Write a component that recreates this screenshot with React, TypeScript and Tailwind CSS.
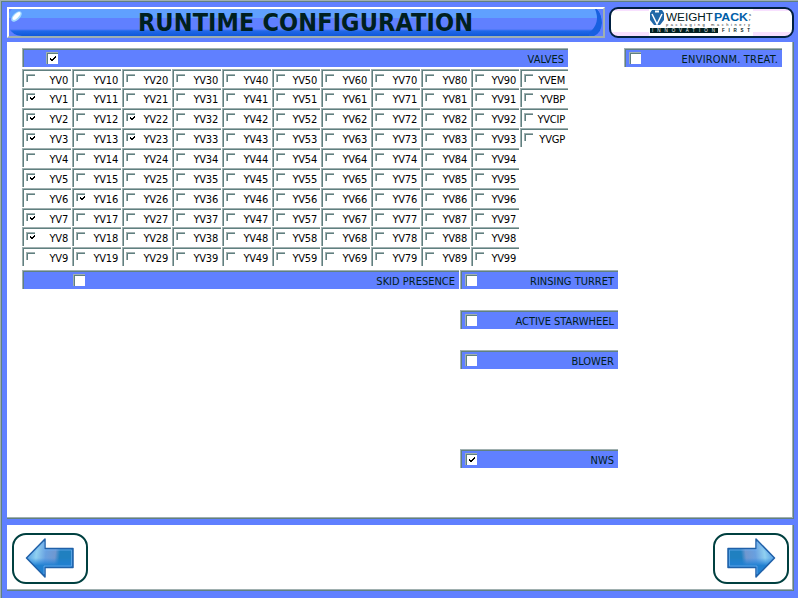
import React from "react";

const FONT = "font-['DejaVu_Sans_Condensed','DejaVu_Sans',sans-serif] [font-stretch:condensed]";

const CHECKED = new Set(["YV1", "YV2", "YV3", "YV5", "YV7", "YV8", "YV16", "YV22", "YV23"]);
const EXTRA = ["YVEM", "YVBP", "YVCIP", "YVGP"];

function Tick() {
  return (
    <svg width="7" height="7" viewBox="0 0 7 7" shapeRendering="crispEdges" fill="#000">
      <path d="M1 3h1v2h-1zM2 4h1v2h-1zM3 4h1v2h-1zM4 3h1v2h-1zM5 2h1v2h-1zM6 1h1v2h-1z" />
    </svg>
  );
}

function SmallTick() {
  return (
    <svg width="5" height="5" viewBox="0 0 5 5" shapeRendering="crispEdges" fill="#000">
      <path d="M0 1h1v2h-1zM1 2h1v2h-1zM2 2h1v2h-1zM3 1h1v2h-1zM4 0h1v2h-1z" />
    </svg>
  );
}

function Box({ on }: { on?: boolean }) {
  return (
    <span className="flex h-3 w-3 shrink-0 border-l border-t border-[#a0b0b0] bg-white">
      <span className="flex h-[11px] w-[11px] border-l border-t border-[#608080] pl-px pt-px">
        {on && <Tick />}
      </span>
    </span>
  );
}

function Cell({ label }: { label: string }) {
  return (
    <div className="mb-px mr-px border-l border-t border-[#a0b0b0]">
      <div className="flex h-full justify-between border-l border-t border-[#608080] pl-[2px] pr-[3px]">
        <span className="mt-[3px] h-2 w-[9px] border-l border-t border-[#a0b0b0]">
          <span className="flex h-[7px] w-2 border-l border-t border-[#608080] pl-[2px] pt-px">
            {CHECKED.has(label) && <SmallTick />}
          </span>
        </span>
        <span className="pt-[3px] text-[11px] leading-[13px] tracking-[-0.2px]">{label}</span>
      </div>
    </div>
  );
}

function Bar({ label, on, className, pad }: { label: string; on?: boolean; className: string; pad: string }) {
  return (
    <div className={"h-[19px] border-l border-t border-[#a0b0b0] " + className}>
      <div className={"flex h-full justify-between border-l border-t border-[#608080] bg-[#6080ff] pr-[4px] pt-[2px] " + pad}>
        <Box on={on} />
        <span className="pt-[1px] text-[11px] leading-[14px] text-[#002020]">{label}</span>
      </div>
    </div>
  );
}

function Arrow({ flip }: { flip?: boolean }) {
  return (
    <span className="flex h-[51px] w-[76px] items-start justify-center rounded-[14px] border-2 border-[#004040] bg-white pr-px pt-[3px]">
      <svg width="50" height="40" viewBox="0 0 50 40" className={flip ? "-scale-x-100" : ""}>
        <defs>
          <linearGradient id="arrow" x1="0" x2="1" y1="0" y2="0.1">
            <stop offset="0" stopColor="#4090e0" />
            <stop offset="0.25" stopColor="#90d0f0" />
            <stop offset="0.45" stopColor="#68a0e0" />
            <stop offset="0.65" stopColor="#7098d0" />
            <stop offset="0.75" stopColor="#2080c0" />
            <stop offset="1" stopColor="#2080c0" />
          </linearGradient>
          <linearGradient id="shade" x1="0" x2="0" y1="0" y2="1">
            <stop offset="0.5" stopColor="#2080e0" stopOpacity="0" />
            <stop offset="0.7" stopColor="#2080d0" />
          </linearGradient>
        </defs>
        <path d="M1.500 20 20 1V10.500H48V29.500H20V39Z" fill="url(#arrow)" />
        <path d="M1.500 20 20 1V10.500H48V29.500H20V39Z" fill="url(#shade)" stroke="#2060a8" strokeWidth="1.5" strokeLinejoin="round" />
        <path d="M3.500 20 19 4V12H46.500V28H19V36" fill="none" stroke="#70b0f0" strokeWidth="0.7" />
      </svg>
    </span>
  );
}

function Logo() {
  return (
    <div className="flex h-[31px] w-[185px] justify-center rounded-[9px] border-2 border-[#002040] bg-white bg-[linear-gradient(#f8e0ff_2px,transparent_2px,transparent_23px,#f8e0ff_23px)] pr-[2px]">
      <svg width="104" height="27" viewBox="0 0 104 27" className="font-['Liberation_Sans',Arial,sans-serif]">
        <rect width="104" height="27" fill="#fff" />
        <path d="M3 1H13L15 4V11L11 16H5L1 11V4Z" fill="#2068a8" />
        <path d="M3 5 8 15 13 5" fill="none" stroke="#fff" strokeWidth="1.500" />
        <path d="M6 1.500H10V3.500H6Z" fill="#fff" />
        <text x="17" y="11.500" fontSize="10" fill="#002020" textLength="47" lengthAdjust="spacingAndGlyphs">WEIGHT</text>
        <text x="65" y="11.500" fontSize="10" fontWeight="bold" fill="#0060a8" textLength="34" lengthAdjust="spacingAndGlyphs">PACK</text>
        <text x="100" y="7" fontSize="4" fill="#002020">s</text>
        <text x="100" y="12" fontSize="4" fill="#002020">r</text>
        <text x="17" y="17" fontSize="4" fill="#202828" textLength="84">packaging machinery</text>
        <rect x="1" y="19" width="68" height="5" fill="#002020" />
        <text x="3" y="23.200" fontSize="4.500" fill="#fff" textLength="63">INNOVATION</text>
        <text x="73" y="23.200" fontSize="4.500" fontWeight="bold" fill="#002020" textLength="28">FIRST</text>
      </svg>
    </div>
  );
}

export default function App() {
  const cells: string[] = [];
  for (let r = 0; r < 10; r++) {
    for (let c = 0; c < 10; c++) cells.push(c === 0 ? `YV${r}` : `YV${c}${r}`);
    cells.push(EXTRA[r] ?? "");
  }
  return (
    <div className={"h-[600px] w-[800px] overflow-hidden bg-white text-black " + FONT}>
      <div className="h-[598px] w-[798px] border-l border-t border-[#a0b0b0] bg-[#6080ff]">
        <div className="h-full border-l border-t border-[#608080] pl-[5px] pt-[5px]">
          <header className="flex h-[35px]">
            <div className="h-[31px] w-[598px] border-2 border-b-[#a0b0b0] border-l-white border-r-[#a0b0b0] border-t-white bg-[#6080ff]">
              <div className="flex h-[27px] justify-between bg-[linear-gradient(#60a0ff_0px,#60a0ff_9px,#6080ff_9px,#6080ff_20px,#2068e8_22px,#1058d8_27px)]">
                <svg width="14" height="27" viewBox="0 0 14 27">
                  <path d="M0 0H3L0 4ZM0 19Q3 26 13 27H0Z" fill="#6080ff" />
                  <ellipse cx="7.500" cy="7.500" rx="6.500" ry="3.500" transform="rotate(-45 7.500 7.500)" fill="#a0d8ff" />
                  <ellipse cx="7.500" cy="7" rx="5" ry="2" transform="rotate(-45 7.500 7)" fill="#fff" />
                </svg>
                <h1 className="-ml-px text-[25px] font-bold leading-[28px] tracking-[0.1px] text-[#002020]">RUNTIME CONFIGURATION</h1>
                <svg width="14" height="27" viewBox="0 0 14 27">
                  <path d="M6 0Q12 14 0 24V27H5Q13 23 13 14Q13 5 8 0Z" fill="#1860e0" />
                  <path d="M8 0H14V27H5Q13 23 13 14Q13 5 8 0Z" fill="#6080ff" />
                </svg>
              </div>
            </div>
            <div className="ml-1"><Logo /></div>
          </header>

          <main className="h-[477px] w-[787px] border-b border-r border-[#608080]">
            <div className="flex h-full border-b border-r border-[#a0b0b0] bg-white pl-[15px] pt-[6px]">
              <div className="w-[602px] shrink-0">
                <Bar label="VALVES" on className="w-[546px]" pad="pl-[22px]" />
                <div className="mt-[2px] grid grid-cols-[50px_50px_50px_50px_50px_49px_50px_50px_50px_49px_49px] grid-rows-[19px_20px_20px_20px_20px_20px_20px_19px_20px_20px]">
                  {cells.map((label, i) => (label ? <Cell key={i} label={label} /> : <span key={i} />))}
                </div>
                <div className="mt-[3px] flex gap-[1px]">
                  <Bar label="SKID PRESENCE" className="w-[437px]" pad="pl-[49px]" />
                  <Bar label="RINSING TURRET" className="w-[158px]" pad="pl-[3px]" />
                </div>
                <div className="ml-[438px] mt-[21px] flex flex-col">
                  <Bar label="ACTIVE STARWHEEL" className="w-[158px]" pad="pl-[3px]" />
                  <Bar label="BLOWER" className="mt-[21px] w-[158px]" pad="pl-[3px]" />
                  <Bar label="NWS" on className="mt-[80px] w-[158px]" pad="pl-[3px]" />
                </div>
              </div>
              <Bar label="ENVIRONM. TREAT." className="w-[158px] tracking-[0.2px]" pad="pl-[3px]" />
            </div>
          </main>

          <footer className="mt-[6px] h-[66px] w-[787px] border-b border-r border-[#608080]">
            <div className="flex h-full justify-between border-b border-r border-[#a0b0b0] bg-white pl-[5px] pr-[3px] pt-[8px]">
              <Arrow />
              <Arrow flip />
            </div>
          </footer>
        </div>
      </div>
    </div>
  );
}
